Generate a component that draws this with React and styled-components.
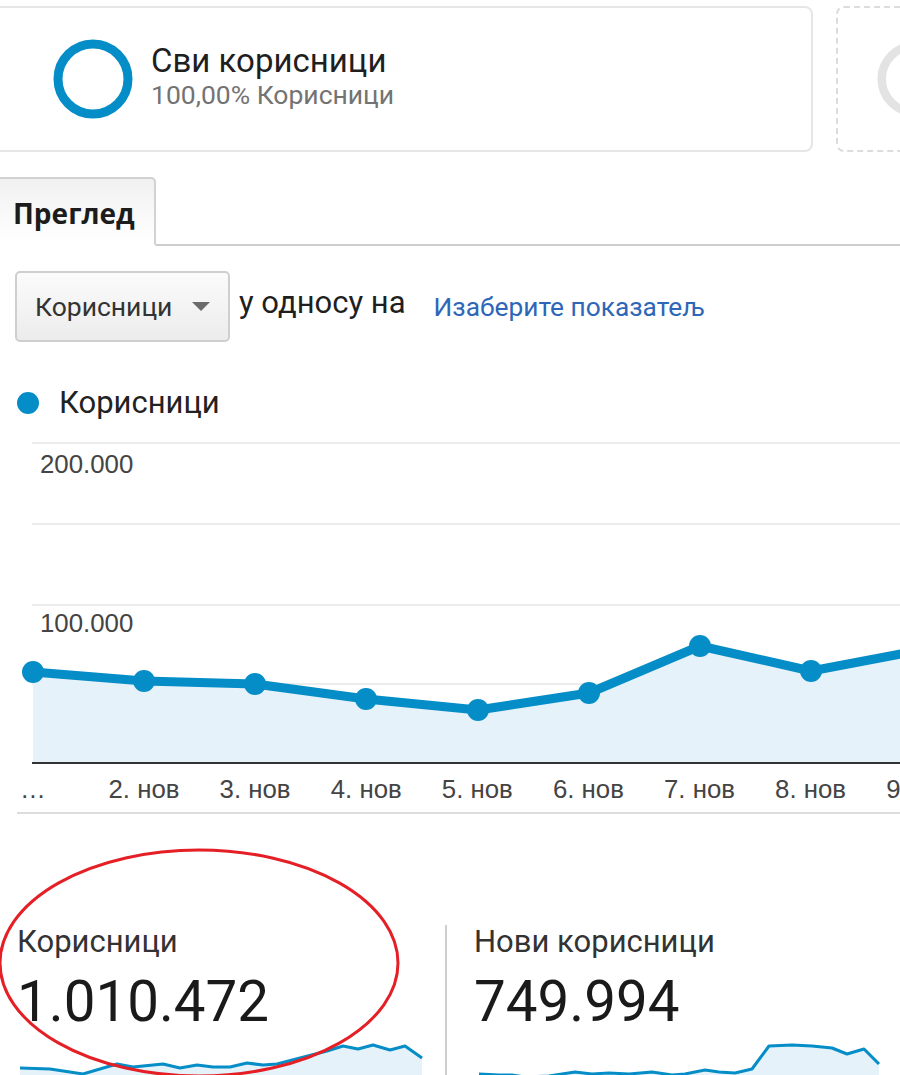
import React from 'react'
import styled, { createGlobalStyle } from 'styled-components'

const GlobalStyle = createGlobalStyle`
    body {
        margin: 0;
        background: #fff;
        font-family: Roboto, "Liberation Sans", Arial, sans-serif;
        color: #222;
    }
`

const Page = styled.div`
    width: 900px;
    height: 1075px;
    overflow: hidden;
    position: relative;
    background: #fff;
`

const SegmentRow = styled.div`
    display: flex;
    gap: 23px;
    padding-top: 6px;
`

const SegmentCard = styled.div`
    display: flex;
    align-items: center;
    gap: 17px;
    width: 833px;
    height: 146px;
    margin-left: -20px;
    padding-left: 70px;
    box-sizing: border-box;
    border: 2px solid #e6e6e6;
    border-radius: 8px;
    flex-shrink: 0;
`

const EmptySegment = styled.div`
    display: flex;
    align-items: center;
    width: 120px;
    height: 146px;
    padding-left: 38px;
    box-sizing: border-box;
    border: 2px dashed #dcdcdc;
    border-radius: 8px;
    flex-shrink: 0;
`

const SegmentText = styled.div`
    display: flex;
    flex-direction: column;
    margin-top: -6px;
`

const SegmentTitle = styled.div`
    font-size: 33px;
    color: #1f1f1f;
    line-height: 38px;
`

const SegmentSub = styled.div`
    font-size: 26.5px;
    color: #737373;
    line-height: 30px;
`

const TabBar = styled.div`
    display: flex;
    margin-top: 25px;
    border-bottom: 2px solid #cdcdcd;
`

const Tab = styled.div`
    display: flex;
    align-items: center;
    width: 160px;
    height: 69px;
    margin-left: -4px;
    margin-bottom: -2px;
    padding-left: 17px;
    padding-top: 2px;
    box-sizing: border-box;
    border: 2px solid #d2d2d2;
    border-bottom: 2px solid #fff;
    border-left: none;
    border-radius: 0 5px 0 0;
    background: linear-gradient(#f1f1f1, #fff);
    font-family: "Open Sans", "Liberation Sans", sans-serif;
    font-weight: 700;
    font-size: 28px;
    color: #1c1c1c;
`

const Controls = styled.div`
    display: flex;
    align-items: center;
    margin-top: 25px;
    padding-left: 15px;
`

const Dropdown = styled.div`
    display: flex;
    align-items: center;
    justify-content: space-between;
    width: 215px;
    height: 71px;
    padding: 0 18px 0 18px;
    box-sizing: border-box;
    border: 2px solid #cfcfcf;
    border-radius: 5px;
    background: linear-gradient(#fbfbfb, #ececec);
    font-size: 26.5px;
    color: #333;
`

const Caret = styled.span`
    width: 0;
    height: 0;
    border-left: 9px solid transparent;
    border-right: 9px solid transparent;
    border-top: 9px solid #6b6b6b;
`

const Versus = styled.span`
    margin-left: 9px;
    margin-top: -8px;
    font-size: 31px;
    color: #1f1f1f;
`

const MetricLink = styled.a`
    margin-left: 28px;
    font-size: 26.3px;
    color: #2e66b8;
    text-decoration: none;
`

const Legend = styled.div`
    display: flex;
    align-items: center;
    gap: 20px;
    margin-top: 42px;
    padding-left: 17px;
    font-size: 31px;
    color: #222;
`

const Dot = styled.span`
    width: 22px;
    height: 22px;
    border-radius: 50%;
    background: ${props => props.color};
`

const ChartBox = styled.div`
    margin-top: 21px;
    height: 370px;
`

const Rule = styled.div`
    height: 2px;
    margin-left: 17px;
    background: #dcdcdc;
`

const Metrics = styled.div`
    position: relative;
    display: grid;
    grid-template-columns: 445px 1fr;
    margin-top: 111px;
`

const Metric = styled.div`
    display: flex;
    flex-direction: column;
    padding-left: ${props => props.$first ? '17px' : '27px'};
    border-left: ${props => props.$first ? 'none' : '2px solid #cfcfcf'};
    height: 170px;
`

const MetricLabel = styled.div`
    font-size: 31px;
    color: #333;
    line-height: 34px;
`

const MetricValue = styled.div`
    font-size: 56.5px;
    color: #1a1a1a;
    line-height: 62px;
    margin-top: 12px;
`

const Spark = styled.svg`
    display: block;
    flex-shrink: 0;
    margin-top: 4px;
    margin-left: ${props => props.$offset}px;
`

const Annotation = styled.svg`
    position: absolute;
    left: -4px;
    top: -85px;
    pointer-events: none;
`

const BLUE = '#058dc7'

const points = [
    [33, 671], [144, 680], [255, 683], [366, 698], [478, 709],
    [589, 692], [700, 645], [811, 670], [922, 649],
]

const xLabels = ['2. нов', '3. нов', '4. нов', '5. нов', '6. нов', '7. нов', '8. нов', '9. нов']

const usersSpark = [
    [0, 31], [30, 32], [63, 37], [97, 27], [113, 30], [143, 27], [160, 31], [177, 28], [193, 30],
    [210, 30], [227, 26], [243, 28], [257, 27], [280, 21], [307, 14], [323, 9], [338, 12],
    [353, 8], [370, 13], [385, 9], [402, 21],
]

const newUsersSpark = [
    [0, 37], [20, 38], [33, 38], [46, 40], [70, 39], [96, 35], [113, 37], [130, 36], [150, 37],
    [173, 35], [193, 38], [206, 37], [226, 33], [240, 35], [256, 36], [273, 32], [290, 9],
    [313, 8], [333, 9], [353, 11], [368, 17], [385, 12], [400, 27],
]

function Ring({ color }) {
    return (
        <svg width="82" height="82" viewBox="0 0 82 82">
            <circle cx="41" cy="41" r="35" fill="none" stroke={color} strokeWidth="9" />
        </svg>
    )
}

function UsersChart() {
    const top = 441
    const line = points.map(([x, y]) => `${x},${y - top}`).join(' ')
    const area = `M33,${762 - top} L${line.split(' ').join(' L')} L922,${762 - top} Z`
    return (
        <svg width="900" height="370" viewBox="0 0 900 370">
            {[0, 81, 162, 241].map(y => (
                <line key={y} x1="32" x2="900" y1={y + 1} y2={y + 1} stroke="#ececec" strokeWidth="2" />
            ))}
            <path d={area} fill="#e6f2f9" />
            <line x1="32" x2="900" y1={762 - top} y2={762 - top} stroke="#333" strokeWidth="2" />
            <polyline points={line} fill="none" stroke={BLUE} strokeWidth="9" strokeLinejoin="round" />
            {points.map(([x, y]) => (
                <circle key={x} cx={x} cy={y - top} r="11" fill={BLUE} />
            ))}
            <g fontFamily="'Liberation Sans', Arial, sans-serif" fontSize="25.8" fill="#444">
                <text x="40" y={472 - top}>200.000</text>
                <text x="40" y={631 - top}>100.000</text>
                <text x="20" y={797 - top}>…</text>
                {xLabels.map((label, i) => (
                    <text key={label} x={144 + i * 111.1} y={797 - top} textAnchor="middle">{label}</text>
                ))}
            </g>
        </svg>
    )
}

function Sparkline({ data, offset }) {
    const line = data.map(([x, y]) => `${x},${y}`).join(' ')
    const last = data[data.length - 1][0]
    return (
        <Spark width={last + 4} height="46" viewBox={`0 0 ${last + 4} 46`} $offset={offset}>
            <path d={`M0,46 L${line.split(' ').join(' L')} L${last},46 Z`} fill="#e6f2f9" />
            <polyline points={line} fill="none" stroke={BLUE} strokeWidth="3" strokeLinejoin="round" />
        </Spark>
    )
}

export default function App() {
    return (
        <Page>
            <GlobalStyle />
            <SegmentRow>
                <SegmentCard>
                    <Ring color={BLUE} />
                    <SegmentText>
                        <SegmentTitle>Сви корисници</SegmentTitle>
                        <SegmentSub>100,00% Корисници</SegmentSub>
                    </SegmentText>
                </SegmentCard>
                <EmptySegment>
                    <Ring color="#e3e3e3" />
                </EmptySegment>
            </SegmentRow>

            <TabBar>
                <Tab>Преглед</Tab>
            </TabBar>

            <Controls>
                <Dropdown>
                    Корисници
                    <Caret />
                </Dropdown>
                <Versus>у односу на</Versus>
                <MetricLink href="#">Изаберите показатељ</MetricLink>
            </Controls>

            <Legend>
                <Dot color={BLUE} />
                Корисници
            </Legend>

            <ChartBox>
                <UsersChart />
            </ChartBox>
            <Rule />

            <Metrics>
                <Metric $first>
                    <MetricLabel>Корисници</MetricLabel>
                    <MetricValue>1.010.472</MetricValue>
                    <Sparkline data={usersSpark} offset={3} />
                </Metric>
                <Metric>
                    <MetricLabel>Нови корисници</MetricLabel>
                    <MetricValue>749.994</MetricValue>
                    <Sparkline data={newUsersSpark} offset={5} />
                </Metric>
                <Annotation width="410" height="245" viewBox="0 0 410 245">
                    <ellipse cx="203" cy="123" rx="199" ry="113" fill="none" stroke="#e51f26" strokeWidth="3" />
                </Annotation>
            </Metrics>
        </Page>
    )
}
